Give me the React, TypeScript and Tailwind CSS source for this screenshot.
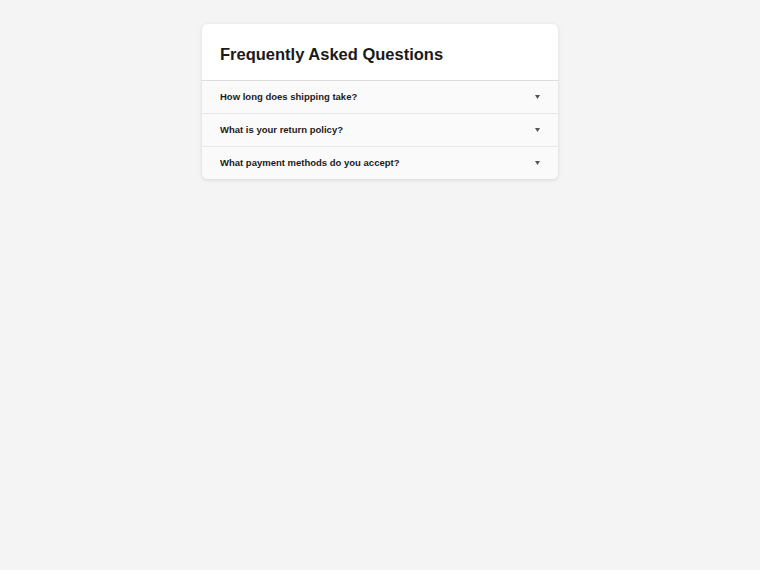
const questions = [
  'How long does shipping take?',
  'What is your return policy?',
  'What payment methods do you accept?',
];

function Caret() {
  return (
    <svg width="5" height="4" viewBox="0 0 5 4" className="shrink-0 fill-[#555]">
      <path d="M0 0h5L2.5 4z" />
    </svg>
  );
}

export default function App() {
  return (
    <div className="min-h-screen bg-[#f4f4f4] pt-6 font-['Liberation_Sans',Arial,sans-serif] text-[#1a1a1a]">
      <div className="mx-auto w-[356px] overflow-hidden rounded-md bg-white shadow-[0_1px_4px_rgba(0,0,0,0.12)]">
        {/* Header */}
        <div className="border-b border-[#dcdcdc] px-[18px] pt-[20px] pb-[16px]">
          <h1 className="text-[16.5px] leading-[20px] font-bold">Frequently Asked Questions</h1>
        </div>

        {/* Questions */}
        {questions.map((q, i) => (
          <button
            key={q}
            className={`flex w-full items-center justify-between bg-[#fafafa] px-[18px] text-left ${
              i > 0 ? 'h-[33px] border-t border-[#e8e8e8]' : 'h-[32px]'
            }`}
          >
            <span className="text-[9.5px] font-bold">{q}</span>
            <Caret />
          </button>
        ))}
      </div>
    </div>
  );
}
